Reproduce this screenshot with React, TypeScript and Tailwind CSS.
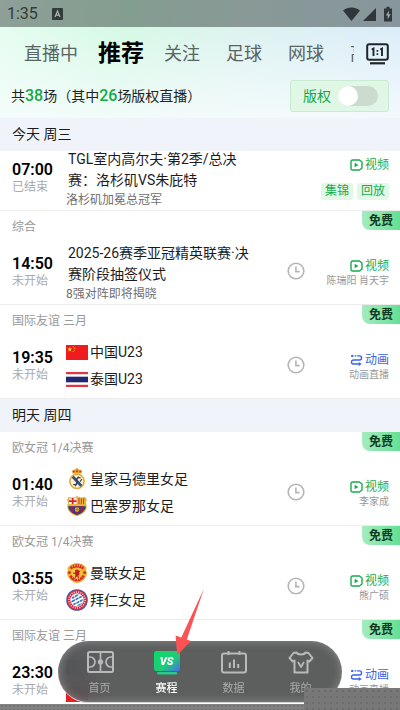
import React, { useState } from "react";
import clsx from "clsx";

type Team = { name: string; logo: React.ReactNode };

type Match = {
  time: string;
  status: string;
  league?: string;
  title?: string;
  note?: string;
  teams?: Team[];
  kind: "video" | "animation";
  caster?: string;
  tags?: string[];
  free?: boolean;
};

const TABS = ["直播中", "推荐", "关注", "足球", "网球", "高尔夫"];

function ChinaFlag() {
  return (
    <svg viewBox="0 0 22 15" className="w-[22px] h-[15px]">
      <rect width="22" height="15" fill="#ee1c1f" />
      <path d="M3.8 2l.6 1.6h1.7L4.7 4.7l.5 1.7-1.4-1-1.4 1 .5-1.7-1.4-1.1h1.7z" fill="#ffde2e" />
      <g fill="#f9b52b">
        <circle cx="7.3" cy="1.8" r=".6" />
        <circle cx="8.6" cy="3.2" r=".6" />
        <circle cx="8.6" cy="5" r=".6" />
        <circle cx="7.3" cy="6.4" r=".6" />
      </g>
    </svg>
  );
}

function ThailandFlag() {
  return (
    <svg viewBox="0 0 22 15" className="w-[22px] h-[15px]">
      <rect width="22" height="15" fill="#e3343f" />
      <rect y="2.2" width="22" height="10.6" fill="#fff" />
      <rect y="4.7" width="22" height="5.6" fill="#1f2a72" />
    </svg>
  );
}

function PlainFlag({ top, bottom }: { top: string; bottom: string }) {
  return (
    <svg viewBox="0 0 22 15" className="w-[22px] h-[15px]">
      <rect width="22" height="8" fill={top} />
      <rect y="7.5" width="22" height="7.5" fill={bottom} />
    </svg>
  );
}

function RealMadrid() {
  return (
    <svg viewBox="0 0 22 22" className="w-[22px] h-[22px]">
      <path d="M6.6 5.6L5.6 2.8 8.3 1.6 11 .6l2.7 1 2.7 1.2-1 2.8z" fill="#e9a93a" />
      <path d="M7.4 4.6l-.8-1.4 1.7-.6.8 1.6zM10 4.2l.3-2h1.4l.3 2zM13 4.2l.7-1.6 1.7.6-.8 1.4z" fill="#c8323c" />
      <circle cx="11" cy=".9" r=".8" fill="#d9982b" />
      <circle cx="11" cy="13.3" r="8" fill="#e8b544" />
      <circle cx="11" cy="13.3" r="6.600" fill="#fbf0c8" />
      <path d="M5.6 9.6l2.2-1.9 8.6 9.3-2 2z" fill="#2b4f87" />
      <path d="M7.2 16.5c2.6.6 4.2-1 3.7-3.6s1.800-4 3.800-2.800M9.200 18.300l2.200-3.400M12.600 8.600l-2.500 3M14 13.600l1.900-2.400" stroke="#3a3f55" strokeWidth="1.100" fill="none" />
      <circle cx="11" cy="13.3" r="6.9" fill="none" stroke="#c9932f" strokeWidth=".6" />
    </svg>
  );
}

function Barcelona() {
  return (
    <svg viewBox="0 0 22 22" className="w-[22px] h-[22px]">
      <path
        d="M1 4.400C2.200 3.800 2.400 3 2.500 1.800 5.500 3 8 2.700 11 1c3 1.700 5.500 2 8.500.8.1 1.200.3 2 1.500 2.600-1 2.200-1.200 3-.6 5 1.200 4.800-1.200 9-9.400 11.800C2.800 18.400.4 14.200 1.600 9.400 2.200 7.400 2 6.600 1 4.400z"
        fill="#e2b13c"
      />
      <path d="M2.600 5c.8-.5 1-1 1.100-1.800 2.600.6 4.800.3 6.800-.9v7H2.400c.8-1.900.9-2.800.2-4.300z" fill="#f8f4ee" />
      <path d="M5.800 2.900h1.800v2.300h2.900v1.700H7.600v2.400H5.800V6.900H2.900V5.200h2.900z" fill="#d9232e" />
      <path d="M11.500 2.300c2 1.200 4.200 1.500 6.800.9.100.8.300 1.300 1.100 1.800-.7 1.500-.6 2.400.2 4.300h-8.100z" fill="#f2bd35" />
      <path d="M13 2.900v6.400M15.300 3.300v6M17.600 3.300v6" stroke="#cf2a30" strokeWidth="1" />
      <path d="M2.300 9.300h17.400v2H2.300z" fill="#e8b33b" />
      <path d="M2.200 11.300h17.600c-.2 3.700-3 6.800-8.800 8.700-5.800-1.900-8.600-5-8.800-8.700z" fill="#233f8b" />
      <path d="M4.800 11.300h2.500V18.400L4.800 16.600zM9.800 11.300h2.400v8.200l-1.200.5-1.200-.5zM14.700 11.300h2.500v5.300l-2.500 1.800z" fill="#a51e4a" />
      <circle cx="11" cy="14.600" r="2.300" fill="#e3b23b" />
      <path d="M11 12.300v4.600M8.700 14.600h4.600" stroke="#8a5a1f" strokeWidth=".5" />
    </svg>
  );
}

function ManUnited() {
  return (
    <svg viewBox="0 0 22 22" className="w-[22px] h-[22px]">
      <path d="M3 4.500C5.500 1.500 8 1.500 11 1c3 .5 5.500.5 8 3.500 1.500.5 2 2 1 3.500 1.500 2 1.200 5.500-.5 7.500-1.500 2.800-5 5-8.500 5.700-3.500-.7-7-2.900-8.500-5.700C.8 13.500.5 10 2 8 1 6.500 1.500 5 3 4.500z" fill="#f0b12e" />
      <path d="M4 4.800c4.500-3.300 9.500-3.300 14 0l-1 2.700c-4-2.600-8-2.600-12 0z" fill="#d4252a" />
      <path d="M3.200 14.200l2.300-1.200c2.800 4.300 8.200 4.300 11 0l2.300 1.200c-3.500 6.700-12.100 6.700-15.600 0z" fill="#d4252a" />
      <path d="M6.300 3.700v1.600M8.800 2.900v1.700M11.300 2.700v1.600M13.600 3v1.600M15.800 3.900v1.400M6 16l1-1.300M8.700 17.800l.5-1.500M11.500 18.200v-1.500M14 17.500l-.6-1.400M16.200 15.700l-1-1.100" stroke="#ffe071" strokeWidth=".9" />
      <path d="M5.600 7.800c3.600-2 7.200-2 10.800 0v4.500c-1.200 2.500-3 4-5.400 4.700-2.400-.7-4.200-2.200-5.400-4.700z" fill="#f4c63b" />
      <path d="M9.200 8.200l1.800-1 1.500 1.200 2.200.3-1.500 1.500.4 2-1.200 1.300.6 2.300h-1l-.9-1.900-1.300 1.900H8.700l.9-2.800-.7-1.200-1.700.3.300-1.600 1.700.2z" fill="#c31d24" />
      <circle cx="3.400" cy="10.700" r="1.400" fill="#d4252a" />
      <circle cx="18.600" cy="10.700" r="1.400" fill="#d4252a" />
    </svg>
  );
}

function Bayern() {
  return (
    <svg viewBox="0 0 22 22" className="w-[22px] h-[22px]">
      <circle cx="11" cy="11" r="10.800" fill="#3b5fa8" />
      <circle cx="11" cy="11" r="10" fill="#dc2740" />
      <circle cx="11" cy="11" r="8.100" fill="none" stroke="#f9dfe3" strokeWidth="1.500" strokeDasharray="1 1.300" />
      <circle cx="11" cy="11" r="6.300" fill="#fff" />
      <g stroke="#3c75bd" strokeWidth="1.700">
        <path d="M6.100 9.200l6.700-4M5 12.900L16 7.200M7 15.800l10-5M11.400 16.900l4.700-2.400" />
      </g>
      <g stroke="#fff" strokeWidth=".7">
        <path d="M8.300 6.400l2.200 9.400M12 5.300l2.200 9.700" />
      </g>
      <circle cx="11" cy="11" r="6.300" fill="none" stroke="#fff" strokeWidth=".8" />
    </svg>
  );
}

function VideoIcon() {
  return (
    <svg viewBox="0 0 13 12" className="w-[13px] h-3" fill="none">
      <path d="M1 2.600A1.600 1.600 0 0 1 2.600 1H9.500L12 3v6L9.500 11H2.600A1.600 1.600 0 0 1 1 9.400z" stroke="currentColor" strokeWidth="1.400" strokeLinejoin="round" />
      <path d="M4.600 3.700v4.600L8.500 6z" fill="currentColor" />
    </svg>
  );
}

function AnimationIcon() {
  return (
    <svg viewBox="0 0 13 12" className="w-[13px] h-3" fill="none" stroke="currentColor" strokeWidth="1.400">
      <path d="M4.500 1.900h5a2 2 0 0 1 0 4.100h-6a2 2 0 0 0 0 4h5.300" strokeDasharray="1.800 .8 30" />
      <circle cx="2.200" cy="1.900" r="1.200" fill="currentColor" stroke="none" />
      <path d="M8.600 7.900l3.200 2.100-3.200 1.900z" fill="currentColor" stroke="none" />
    </svg>
  );
}

function ClockIcon() {
  return (
    <svg viewBox="0 0 18 18" className="w-[18px] h-[18px]" fill="none" stroke="#b5b5b5">
      <circle cx="9" cy="9" r="7.800" strokeWidth="1.600" />
      <path d="M8.900 4.600v5h3.700" strokeWidth="1.600" />
    </svg>
  );
}

const DAYS: { label: string; matches: Match[] }[] = [
  {
    label: "今天 周三",
    matches: [
      {
        time: "07:00",
        status: "已结束",
        title: "TGL室内高尔夫·第2季/总决赛：洛杉矶VS朱庇特",
        note: "洛杉矶加冕总冠军",
        kind: "video",
        tags: ["集锦", "回放"],
      },
      {
        time: "14:50",
        status: "未开始",
        league: "综合",
        title: "2025-26赛季亚冠精英联赛·决赛阶段抽签仪式",
        note: "8强对阵即将揭晓",
        kind: "video",
        caster: "陈瑞阳 肖天宇",
        free: true,
      },
      {
        time: "19:35",
        status: "未开始",
        league: "国际友谊 三月",
        teams: [
          { name: "中国U23", logo: <ChinaFlag /> },
          { name: "泰国U23", logo: <ThailandFlag /> },
        ],
        kind: "animation",
        caster: "动画直播",
        free: true,
      },
    ],
  },
  {
    label: "明天 周四",
    matches: [
      {
        time: "01:40",
        status: "未开始",
        league: "欧女冠 1/4决赛",
        teams: [
          { name: "皇家马德里女足", logo: <RealMadrid /> },
          { name: "巴塞罗那女足", logo: <Barcelona /> },
        ],
        kind: "video",
        caster: "李家成",
        free: true,
      },
      {
        time: "03:55",
        status: "未开始",
        league: "欧女冠 1/4决赛",
        teams: [
          { name: "曼联女足", logo: <ManUnited /> },
          { name: "拜仁女足", logo: <Bayern /> },
        ],
        kind: "video",
        caster: "熊广硕",
        free: true,
      },
      {
        time: "23:30",
        status: "未开始",
        league: "国际友谊 三月",
        teams: [
          { name: "", logo: <PlainFlag top="#1d4b86" bottom="#17457e" /> },
          { name: "", logo: <PlainFlag top="#d3222c" bottom="#ee1c25" /> },
        ],
        kind: "animation",
        caster: "动画直播",
        free: true,
      },
    ],
  },
];

function MatchRow({ match }: { match: Match }) {
  return (
    <li className={clsx("border-b border-[#ededee] bg-white", !match.league && "-mt-1")}>
      {match.league && (
        <div className="flex h-[30px] items-start justify-between pl-3">
          <span className="pt-[7px] text-xs leading-[18px] text-[#999]">{match.league}</span>
          {match.free && (
            <span className="h-[19px] w-[38px] rounded-bl-lg bg-gradient-to-r from-[#a5ebc0] to-[#63e093] text-center text-xs leading-5 font-bold text-[#0e3a22]">
              免费
            </span>
          )}
        </div>
      )}
      <div className="flex h-[63px] items-center pr-[11px] pl-3">
        <div className="w-[54px] shrink-0">
          <div className="text-base leading-[18px] font-semibold text-black">{match.time}</div>
          <div className="text-xs leading-[17px] text-[#aaa]">{match.status}</div>
        </div>

        <div className="min-w-0 flex-1 pr-7">
          {match.title && (
            <>
              <h3 className="pl-0.5 text-sm leading-[21px] text-[#1c1c1c]">{match.title}</h3>
              <p className="text-xs leading-[18px] text-[#6f6f6f]">{match.note}</p>
            </>
          )}
          {match.teams && (
            <div className="mb-0.5">
              {match.teams.map((team, i) => (
                <div key={i} className="flex h-[27px] items-center gap-0.5">
                  {team.logo}
                  <span className="text-sm text-[#1c1c1c]">{team.name}</span>
                </div>
              ))}
            </div>
          )}
        </div>

        <div className="mb-1 w-[18px] shrink-0">{match.league && <ClockIcon />}</div>

        <div className="flex w-[84px] shrink-0 flex-col items-end">
          <a
            href="#live"
            className={clsx(
              "flex items-center gap-0.5 text-xs leading-4",
              match.kind === "video" ? "text-[#17ab4e]" : "text-[#3763e6]"
            )}
          >
            {match.kind === "video" ? <VideoIcon /> : <AnimationIcon />}
            {match.kind === "video" ? "视频" : "动画"}
          </a>
          {match.caster && <span className="text-[10px] leading-[14px] text-[#999]">{match.caster}</span>}
          {match.tags && (
            <div className="mt-2.5 flex gap-1">
              {match.tags.map(tag => (
                <a key={tag} href="#tag" className="rounded-[3px] bg-[#e1f8e8] px-1 text-xs leading-[17px] text-[#17ab4e]">
                  {tag}
                </a>
              ))}
            </div>
          )}
        </div>
      </div>
    </li>
  );
}

function StatusBar() {
  return (
    <div className="flex h-[27px] items-center bg-[#0b1512]/40 pr-[7px] pl-[7px] text-[#343b3b]">
      <span className="text-base">1:35</span>
      <svg viewBox="0 0 11 12" className="ml-[14px] h-3 w-[11px]">
        <rect width="11" height="12" rx="1" fill="#343b3b" />
        <path d="M3 9l2.500-6L8 9M3.900 7.200h3.200" stroke="#a9b8b3" strokeWidth="1.200" fill="none" />
      </svg>
      <svg viewBox="0 0 50 16" className="ml-auto h-4 w-[50px]" fill="#30363a">
        <path d="M0 4.500C5 .6 12 .6 17 4.500L8.500 15z" />
        <path d="M33 2v13H20z" />
        <path d="M41 2.500h2.500V.8h3v1.700H49V15.500h-8z" />
        <path d="M46 4.500l-3.200 5h1.900v4l3-5.200h-1.900z" fill="#9aa3a9" />
      </svg>
    </div>
  );
}

const NAV = [
  {
    label: "首页",
    icon: (
      <g fill="none" stroke="#b9babb" strokeWidth="2">
        <rect x="2" y="1" width="25" height="20" rx="1.500" />
        <path d="M14.500 1v20M2.500 6h1.500a5 5 0 0 1 0 10h-1.500M26.500 6h-1.500a5 5 0 0 0 0 10h1.500" strokeWidth="1.700" />
        <circle cx="14.500" cy="11" r="2.300" fill="#b9babb" strokeWidth="1" />
      </g>
    ),
  },
  {
    label: "赛程",
    icon: (
      <g>
        <defs>
          <linearGradient id="vs" x1="0" y1="0" x2="1" y2="1">
            <stop offset="0" stopColor="#0bdc66" />
            <stop offset=".6" stopColor="#1fca78" />
            <stop offset="1" stopColor="#4a6af5" />
          </linearGradient>
        </defs>
        <rect x="1" y="0" width="26" height="20" rx="2.500" fill="url(#vs)" />
        <rect x="4" y="21" width="20" height="2.500" rx="1" fill="#27c98d" />
        <text x="13.500" y="14" textAnchor="middle" fontSize="11" fontWeight="900" fontStyle="italic" fill="#fff">
          VS
        </text>
      </g>
    ),
  },
  {
    label: "数据",
    icon: (
      <g fill="none" stroke="#b9babb" strokeWidth="2">
        <rect x="2" y="2.500" width="24" height="19" rx="2" />
        <path d="M8.500 0v4M19.500 0v4M9.800 11.500v5.500M14 8.500v8.500M18.200 13v4" />
      </g>
    ),
  },
  {
    label: "我的",
    icon: (
      <g fill="none" stroke="#b9babb" strokeWidth="2" strokeLinejoin="round">
        <path d="M9.500 1.500c1.200 2.600 7.800 2.600 9 0l3 .5 4 5-3.200 3.500-1.800-1V21.500h-13V9.500l-1.800 1L2.500 7l4-5z" />
        <path d="M11 11l3 5 3-5" strokeWidth="1.800" />
      </g>
    ),
  },
];

export default function App() {
  const [tab, setTab] = useState("推荐");
  const [page, setPage] = useState("赛程");
  const [licensed, setLicensed] = useState(false);

  return (
    <div className="relative flex h-screen flex-col overflow-hidden bg-white font-[Roboto,'Noto_Sans_CJK_SC',sans-serif]">
      <header className="shrink-0 bg-[linear-gradient(to_bottom,transparent_20%,rgba(247,252,253,0.85)),linear-gradient(100deg,#e6fdf1_0%,#d4f9e4_30%,#dcf3ee_55%,#dbebfa_100%)]">
        <StatusBar />
        <div className="flex h-[53px] items-center pr-[11px] pl-6">
          <nav className="flex flex-1 items-center gap-[26px] overflow-hidden whitespace-nowrap">
            {TABS.map(item => (
              <button
                key={item}
                onClick={() => setTab(item)}
                className={clsx(
                  "shrink-0 leading-8",
                  item === tab ? "-mx-1.5 text-[23px] font-bold text-black" : "text-lg text-[#5b6463]"
                )}
              >
                {item}
              </button>
            ))}
          </nav>
          <button aria-label="比分" className="ml-3 shrink-0">
            <svg viewBox="0 0 23 22" className="h-[22px] w-[23px]" fill="none" stroke="#1f2628" strokeWidth="2">
              <rect x="1.200" y="1.200" width="20.600" height="15.600" rx="2" />
              <path d="M4 20.300h15" strokeWidth="2.200" />
              <path d="M5.700 6.500l1.800-.9V13M14.200 6.500l1.800-.9V13" strokeWidth="1.900" />
              <path d="M11.400 7v1.800M11.400 10.300v1.800" strokeWidth="1.600" />
            </svg>
          </button>
        </div>
        <div className="flex h-[38px] items-start justify-between pr-[11px] pl-[11px]">
          <p className="text-sm leading-8 whitespace-nowrap text-[#1f2423]">
            共<b className="text-base font-medium text-[#14a84a]">38</b>场（其中
            <b className="text-base font-medium text-[#14a84a]">26</b>场版权直播）
          </p>
          <label className="flex h-8 w-[99px] shrink-0 items-center justify-between rounded-[3px] border border-[#c9ebd3] bg-[#e0f7e5] pr-2.5 pl-3 text-sm text-[#14a84a]">
            版权
            <input
              type="checkbox"
              checked={licensed}
              onChange={e => setLicensed(e.target.checked)}
              className="h-5 w-10 appearance-none rounded-full bg-[#cbdccf] before:block before:h-5 before:w-5 before:rounded-full before:bg-white checked:bg-[#14a84a] checked:before:ml-5"
            />
          </label>
        </div>
      </header>

      <main className="min-h-0 flex-1 overflow-hidden">
        {DAYS.map(day => (
          <section key={day.label}>
            <h2 className="relative z-10 bg-[#f0f4fa] pl-3 text-sm leading-[33px] text-[#1c1c1c]">{day.label}</h2>
            <ul>
              {day.matches.map(match => (
                <MatchRow key={match.time} match={match} />
              ))}
            </ul>
          </section>
        ))}
      </main>

      <nav className="absolute inset-x-[58px] bottom-[7px] z-20 flex h-[62px] rounded-full border-b border-[#d5d5d5] bg-[#4b4c4d]/90 px-2 shadow-[inset_0_0_8px_rgba(255,255,255,0.3)] backdrop-blur-md">
        {NAV.map(item => (
          <button
            key={item.label}
            onClick={() => setPage(item.label)}
            className={clsx(
              "flex flex-1 flex-col items-center pt-2.5 text-[11px] leading-4",
              item.label === page ? "font-medium text-white" : "text-[#a9aaab]"
            )}
          >
            <svg viewBox="0 0 28 24" className="mb-1.5 h-6 w-7">
              {item.icon}
            </svg>
            {item.label}
          </button>
        ))}
      </nav>

      {/* pointer to the schedule tab */}
      <svg viewBox="0 0 30 70" className="pointer-events-none absolute bottom-[53px] left-[175px] z-30 h-[70px] w-[30px]">
        <path d="M29 1.500L11.800 52.500l4 1.500L2.200 68.500.6 48.500l5.700 2z" fill="#fb5254" />
      </svg>

      <div className="absolute inset-x-0 bottom-0 z-30 h-1.5 bg-[#828282] bg-[radial-gradient(#737373_30%,transparent_40%)] bg-[size:4px_4px]" />
      <div className="absolute right-0 bottom-0 z-30 h-[22px] w-24 bg-[#787878] bg-[radial-gradient(#6c6c6c_20%,transparent_30%)] bg-[size:6px_6px]" />
    </div>
  );
}
